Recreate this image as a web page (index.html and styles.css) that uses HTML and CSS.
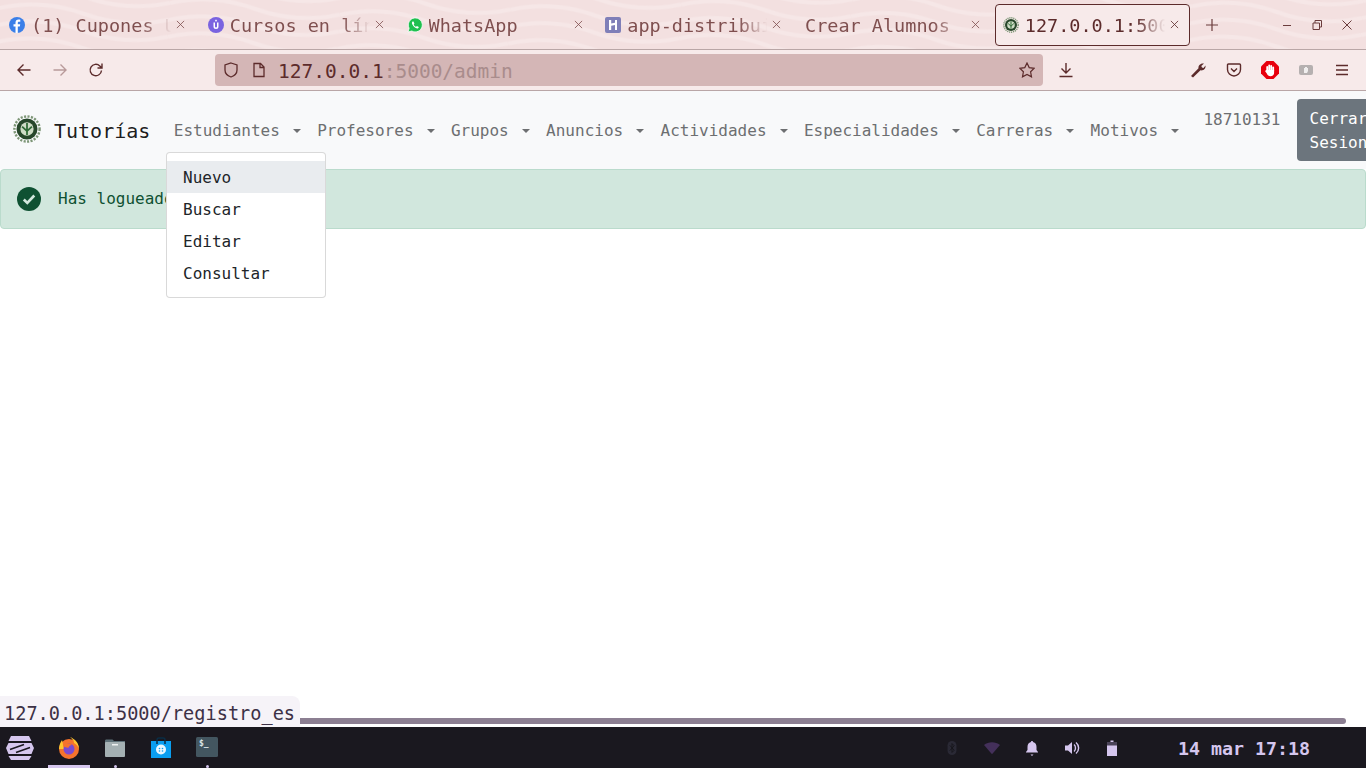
FILE: index.html
```html
<!doctype html>
<html lang="es">
<head>
    <meta charset="UTF-8">
    <title>Tutorías</title>
    <link rel="stylesheet" href="styles.css">
</head>
<body>
<div class="screen">
    <!-- barra de pestanas -->
    <div class="tabbar">
        <svg class="waves" width="1366" height="49">
            <defs>
                <pattern id="wave" width="170" height="17" patternUnits="userSpaceOnUse" patternTransform="rotate(4)">
                    <path d="M0 8C28 0 57 0 85 8S142 16 170 8" fill="none" stroke="#f6e7e7" stroke-width="4"/>
                </pattern>
            </defs>
            <rect width="1366" height="49" fill="url(#wave)"/>
        </svg>
        <div class="tab">
            <svg class="favicon" viewBox="0 0 16 16"><circle cx="8" cy="8" r="8" fill="#3b7fe8"/><path d="M8.800 16V9.600h2l.4-2.300H8.800V6c0-.8.3-1.200 1.200-1.200h1.300V2.800C10.900 2.700 10.300 2.600 9.600 2.600 7.700 2.600 6.500 3.700 6.500 5.700v1.600H4.500v2.300h2V16z" fill="#fff"/></svg>
            <span class="tab-title">(1) Cupones Udemy</span>
            <svg class="tab-close" viewBox="0 0 10 10"><path d="M1 1l8 8M9 1l-8 8"/></svg>
        </div>
        <div class="tab">
            <svg class="favicon" viewBox="0 0 16 16"><circle cx="8" cy="8" r="8" fill="#7a63e0"/><path d="M5.500 5.500v4a2.500 2.500 0 0 0 5 0v-4H9v4a1 1 0 0 1-2 0v-4z" fill="#fff"/><rect x="7.200" y="2.800" width="1.600" height="1.600" fill="#fff"/></svg>
            <span class="tab-title">Cursos en línea</span>
            <svg class="tab-close" viewBox="0 0 10 10"><path d="M1 1l8 8M9 1l-8 8"/></svg>
        </div>
        <div class="tab">
            <svg class="favicon" viewBox="0 0 16 16"><path d="M1 15l1.100-3.800A7 7 0 1 1 4.800 14z" fill="#1fc04f" stroke="#fff" stroke-width=".8"/><path d="M5.500 4.500c-.8.800-.8 2 .2 3.500s2.600 3.300 4.500 3.500c.8 0 1.600-.7 1.600-1.500l-1.900-1-.8.800c-1-.4-2-1.400-2.400-2.400l.7-.8-.9-2z" fill="#fff"/></svg>
            <span class="tab-title">WhatsApp</span>
            <svg class="tab-close" viewBox="0 0 10 10"><path d="M1 1l8 8M9 1l-8 8"/></svg>
        </div>
        <div class="tab">
            <svg class="favicon" viewBox="0 0 16 16"><rect width="16" height="16" rx="2" fill="#7f7fb8"/><path d="M4 3h2.200v3.600L10 5.800V3h2v10h-2V8L6.200 8.800V13H4z" fill="#fff"/></svg>
            <span class="tab-title">app-distribuidos</span>
            <svg class="tab-close" viewBox="0 0 10 10"><path d="M1 1l8 8M9 1l-8 8"/></svg>
        </div>
        <div class="tab">
            <span class="tab-title">Crear Alumnos</span>
            <svg class="tab-close" viewBox="0 0 10 10"><path d="M1 1l8 8M9 1l-8 8"/></svg>
        </div>
        <div class="tab tab-active">
            <svg class="favicon" viewBox="0 0 16 16"><use href="#escudo"/></svg>
            <span class="tab-title">127.0.0.1:5000/admin</span>
            <svg class="tab-close" viewBox="0 0 10 10"><path d="M1 1l8 8M9 1l-8 8"/></svg>
        </div>
        <svg class="new-tab" viewBox="0 0 14 14"><path d="M7 1v12M1 7h12"/></svg>
        <div class="win-controls">
            <svg viewBox="0 0 12 12"><path d="M2 6.500h8"/></svg>
            <svg viewBox="0 0 12 12"><path d="M2 4h6.500v6.500H2zM4 4V1.500h6.500V8H8.500"/></svg>
            <svg viewBox="0 0 12 12"><path d="M1.500 1.500l9 9M10.500 1.500l-9 9"/></svg>
        </div>
    </div>

    <!-- barra de direcciones -->
    <div class="toolbar">
        <button class="tool"><svg viewBox="0 0 16 16"><path d="M14.500 8H2M7.500 2.500L2 8l5.500 5.500"/></svg></button>
        <button class="tool tool-off"><svg viewBox="0 0 16 16"><path d="M1.500 8H14M8.500 2.500L14 8l-5.500 5.500"/></svg></button>
        <button class="tool"><svg viewBox="0 0 16 16"><path d="M13.500 8.500a5.700 5.700 0 1 1-1.700-4.600L14 6M14 1.500V6H9.500"/></svg></button>
        <div class="urlbar">
            <svg class="url-icon" viewBox="0 0 16 16"><path d="M8 1l6 2v5c0 3.500-3 6-6 7-3-1-6-3.500-6-7V3z"/></svg>
            <svg class="url-icon" viewBox="0 0 16 16"><path d="M3 1.500h6.500L13 5v9.500H3zM9 1.500V5.500h4"/></svg>
            <span class="url-text"><b>127.0.0.1</b>:5000/admin</span>
            <svg class="url-star" viewBox="0 0 16 16"><path d="M8 1l2.200 4.600 5 .7-3.600 3.500.9 5L8 12.400l-4.500 2.400.9-5L.8 6.300l5-.7z"/></svg>
        </div>
        <button class="tool tool-download"><svg viewBox="0 0 16 16"><path d="M8 1v9.500M3.500 6.500L8 11l4.500-4.500M1.500 14.500h13"/></svg></button>
        <div class="tool-group">
            <button class="tool"><svg viewBox="0 0 16 16"><path class="solid" d="M1 14l7.500-7.800C8 3.500 10.500.8 14 1.500L11.300 4l.7 1.500 1.500.5 2-2.500c.5 3.500-2.500 5.500-5 4.800L3 15.500z"/></svg></button>
            <button class="tool"><svg viewBox="0 0 16 16"><path d="M2.500 2h11c.7 0 1 .4 1 1v4.500c0 3.500-3 6.500-6.500 6.500S1.500 11 1.500 7.500V3c0-.6.3-1 1-1zM5 6.500L8 9.500l3-3"/></svg></button>
            <button class="tool"><svg class="adblock" viewBox="0 0 18 18"><path d="M5.500 0h7L18 5.500v7L12.500 18h-7L0 12.500v-7z" fill="#e8000d"/><path d="M6.200 9.500V6M8.200 9.500V4.300M10.200 9.500V4.800M12.200 10V6.300" stroke="#fff" stroke-width="1.800" stroke-linecap="round"/><path d="M5.300 9h7.800v3c0 2-1.500 3.200-3.500 3.200-2 0-3-1-3.800-2.700L4 10l1.300-1z" fill="#fff"/></svg></button>
            <button class="tool"><svg class="ext" viewBox="0 0 16 16"><rect x="1" y="3" width="14" height="10" rx="2" fill="#b5b0b0"/><path d="M6 11V6h1V5h2v1h1v3l-1 2z" fill="#f0eeee"/></svg></button>
            <button class="tool"><svg viewBox="0 0 16 16"><path d="M2 3.500h12M2 8h12M2 12.500h12"/></svg></button>
        </div>
    </div>

    <!-- pagina -->
    <div class="page">
        <nav class="navbar">
            <a class="brand" href="#">
                <svg class="brand-logo" viewBox="0 0 16 16">
                    <defs>
                        <g id="escudo">
                            <circle cx="8" cy="8" r="7.200" fill="none" stroke="#7d9676" stroke-width="1.400" stroke-dasharray="1.200 .8"/>
                            <circle cx="8" cy="8" r="6" fill="#27472a"/>
                            <circle cx="8" cy="8" r="3.800" fill="#cfdcc6"/>
                            <path d="M8 4.600v6.800M5.200 6.600L8 9.200l2.800-2.600" fill="none" stroke="#2f6a35" stroke-width="1"/>
                        </g>
                    </defs>
                    <use href="#escudo"/>
                </svg>
                Tutorías
            </a>
            <ul class="nav-list">
                <li class="nav-link caret">Estudiantes</li>
                <li class="nav-link caret">Profesores</li>
                <li class="nav-link caret">Grupos</li>
                <li class="nav-link caret">Anuncios</li>
                <li class="nav-link caret">Actividades</li>
                <li class="nav-link caret">Especialidades</li>
                <li class="nav-link caret">Carreras</li>
                <li class="nav-link caret">Motivos</li>
            </ul>
            <span class="nav-user">18710131</span>
            <button class="btn-logout">Cerrar Sesion</button>
        </nav>

        <div class="alert">
            <svg class="alert-icon" viewBox="0 0 24 24"><circle cx="12" cy="12" r="12" fill="#0f5132"/><path d="M6.800 12.500l3.500 3.500 7-7.500" fill="none" stroke="#d1e7dd" stroke-width="2.600"/></svg>
            <span>Has logueado correctamente</span>
        </div>

        <ul class="dropdown">
            <li class="dropdown-item active">Nuevo</li>
            <li class="dropdown-item">Buscar</li>
            <li class="dropdown-item">Editar</li>
            <li class="dropdown-item">Consultar</li>
        </ul>

        <div class="scroll-thumb"></div>
        <div class="status-link">127.0.0.1:5000/registro_es</div>
    </div>

    <!-- panel del sistema -->
    <div class="taskbar">
        <div class="dock">
            <div class="dock-item">
                <svg class="zorin" viewBox="0 0 28 24"><path d="M5 0h18l2.500 5h-23zM2.500 20h23L23 24H5zM2.500 7h23L28 12l-2.500 6h-23L0 12z" fill="#d5c6ee"/><path d="M4 13.500L18 8.500M10 16.500L24 11.500" stroke="#1a181f" stroke-width="1.600"/></svg>
            </div>
            <div class="dock-item running-main">
                <svg viewBox="0 0 22 22"><circle cx="11" cy="12" r="10" fill="#f5732c"/><path d="M4 3c-2 3-3 6-3 9h5zM12 0c5 2 9 6 9 12-1-3-3-5-5-6 0-3-2-4-4-6z" fill="#ffc52e"/><circle cx="11" cy="12" r="5.500" fill="#7a4bd0"/><path d="M5 9c2-3 6-3 9-1-2 0-3 1-3 2s-3 1-6-1z" fill="#f5732c"/></svg>
            </div>
            <div class="dock-item running">
                <svg viewBox="0 0 22 22"><path d="M1 4c0-1 .5-1.500 1.500-1.500h6L10 4h11v4H1z" fill="#5d7078"/><rect x="1" y="5" width="20" height="15" rx="1" fill="#a4b0b3"/><rect x="8" y="7" width="6" height="1.500" fill="#eef1f2"/></svg>
            </div>
            <div class="dock-item">
                <svg viewBox="0 0 22 22"><rect x="1" y="4" width="20" height="17" fill="#0a9ef0"/><path d="M7 7V3a2 2 0 0 1 2-2h4a2 2 0 0 1 2 2v4" fill="none" stroke="#0a2d45" stroke-width="1.500"/><circle cx="11" cy="12.500" r="5" fill="#eaf6fd"/><circle cx="9.500" cy="11.500" r=".8" fill="#0a9ef0"/><circle cx="12.500" cy="11.500" r=".8" fill="#0a9ef0"/><circle cx="9.500" cy="14" r=".8" fill="#0a9ef0"/><circle cx="12.500" cy="14" r=".8" fill="#0a9ef0"/></svg>
            </div>
            <div class="dock-item running">
                <svg viewBox="0 0 22 22"><rect width="22" height="20" rx="1.500" fill="#435660"/><text x="3" y="9" class="term-text">$_</text></svg>
            </div>
        </div>
        <div class="tray">
            <svg viewBox="0 0 12 18"><rect x="1" y="1" width="10" height="16" rx="5" fill="#2a2935"/><path d="M3.500 6l5 5.500L6 14V4l2.500 2.500-5 5.500" fill="none" stroke="#15141a" stroke-width="1"/></svg>
            <svg viewBox="0 0 18 14"><path d="M0 3.500C5-.5 13-.5 18 3.500L9 14z" fill="#44305a"/></svg>
            <svg viewBox="0 0 16 16"><path d="M8 1c.7 0 1 .4 1 1 2.500.6 3.500 2.700 3.500 5v3l1.500 2v.5H2V12l1.500-2V7C3.500 4.700 4.500 2.600 7 2c0-.6.3-1 1-1zM6.500 14.500h3L8 16z" fill="#d5c6ee"/></svg>
            <svg viewBox="0 0 16 16"><path d="M1 5.500h3L8 2v12L4 10.500H1z" fill="#d5c6ee"/><path d="M10 4.500c2 1.500 2 5.500 0 7M12 2.500c3.500 3 3.500 8 0 11" fill="none" stroke="#d5c6ee" stroke-width="1.400"/></svg>
            <svg viewBox="0 0 16 16"><path d="M6.500 .5h3V2H13v14H3V2h3.500z" fill="#d5c6ee"/><path d="M3 2h10v3.500H3z" fill="#4a4358"/></svg>
        </div>
        <div class="clock">14 mar 17:18</div>
    </div>
</div>
</body>
</html>
```

FILE: styles.css
```css
* {
    box-sizing: border-box;
}

html, body {
    margin: 0;
    height: 100%;
    overflow: hidden;
}

body {
    font-family: "DejaVu Sans Mono", "Liberation Mono", monospace;
    font-size: 16px;
    line-height: 24px;
    color: #212529;
}

ul {
    list-style: none;
    margin: 0;
    padding: 0;
}

a {
    text-decoration: none;
}

button {
    font: inherit;
    border: none;
    background: none;
    padding: 0;
}

.screen {
    display: flex;
    flex-direction: column;
    width: 1366px;
    height: 768px;
    overflow: hidden;
}

/* pestanas */
.tabbar {
    position: relative;
    display: flex;
    align-items: center;
    gap: 3.75px;
    flex: none;
    height: 50px;
    padding: 0 0 0 1px;
    background: #f3e0e0;
    border-bottom: 1px solid #b9a6a6;
}

.waves {
    position: absolute;
    left: 0;
    top: 0;
}

.tab {
    position: relative;
    display: flex;
    align-items: center;
    flex: none;
    width: 195px;
    height: 42px;
    padding: 0 8px;
    border: 1px solid transparent;
    color: #7f4f4f;
}

.tab-active {
    background: #f7eaea;
    border-color: #5c2b2b;
    border-radius: 4px;
    color: #5c2b2b;
}

.favicon {
    flex: none;
    width: 16px;
    height: 16px;
    margin: 0 6px 0 -1px;
}

.tab-title {
    flex: 1;
    overflow: hidden;
    white-space: nowrap;
    padding-top: 2px;
    font-size: 18.5px;
    -webkit-mask-image: linear-gradient(to right, #000 78%, transparent 98%);
    mask-image: linear-gradient(to right, #000 78%, transparent 98%);
}

.tab-close {
    flex: none;
    width: 9px;
    height: 9px;
    margin: 0 2px;
    fill: none;
    stroke: currentColor;
    stroke-width: .9;
}

.new-tab {
    position: relative;
    width: 14px;
    height: 14px;
    margin-left: 11px;
    fill: none;
    stroke: #6b3c3c;
    stroke-width: 1.2;
}

.win-controls {
    position: relative;
    display: flex;
    gap: 18px;
    margin-left: auto;
    padding-right: 13px;
}

.win-controls svg {
    width: 12px;
    height: 12px;
    fill: none;
    stroke: #6b3c3c;
    stroke-width: 1;
}

/* direcciones */
.toolbar {
    display: flex;
    align-items: center;
    flex: none;
    height: 41px;
    padding: 0 6px;
    background: #f7eaea;
    border-bottom: 1px solid #b9a6a6;
}

.tool {
    display: flex;
    align-items: center;
    justify-content: center;
    flex: none;
    width: 36px;
    height: 32px;
}

.tool svg {
    width: 16px;
    height: 16px;
    fill: none;
    stroke: #5c2b2b;
    stroke-width: 1.4;
}

.tool svg .solid {
    fill: #5c2b2b;
    stroke: none;
}

.tool svg.adblock,
.tool svg.ext {
    stroke: none;
}

.tool svg.adblock {
    width: 18px;
    height: 18px;
}

.tool-off svg {
    stroke: #b89a9a;
}

.urlbar {
    display: flex;
    align-items: center;
    flex: none;
    width: 828px;
    height: 32px;
    margin-left: 101px;
    padding: 0 8px;
    background: #d4b6b6;
    border-radius: 4px;
}

.url-icon {
    flex: none;
    width: 16px;
    height: 16px;
    margin-right: 12px;
    fill: none;
    stroke: #5c2b2b;
    stroke-width: 1.3;
}

.url-text {
    flex: 1;
    margin-left: -1px;
    padding-top: 4px;
    font-size: 19.5px;
    color: #a98c8c;
}

.url-text b {
    font-weight: normal;
    color: #5c2b2b;
}

.url-star {
    flex: none;
    width: 16px;
    height: 16px;
    fill: none;
    stroke: #5c2b2b;
    stroke-width: 1.2;
}

.tool-download {
    margin-left: 5px;
}

.tool-group {
    display: flex;
    margin-left: auto;
}

/* pagina */
.page {
    position: relative;
    flex: 1;
    background: #fff;
}

.navbar {
    display: flex;
    align-items: center;
    height: 78px;
    padding: 8px 0 8px 13px;
    background: #f8f9fa;
    white-space: nowrap;
}

.brand {
    display: flex;
    align-items: center;
    margin-right: 15.5px;
    padding-top: 2px;
    font-size: 20px;
    color: rgba(0, 0, 0, .9);
}

.brand-logo {
    width: 28px;
    height: 28px;
    margin-right: 13px;
    margin-top: -4px;
}

.nav-list {
    display: flex;
}

.nav-link {
    padding: 9px 8px 7px;
    color: #6d6f71;
}

.caret::after {
    content: "";
    display: inline-block;
    margin: 0 .4px 0 13px;
    vertical-align: .2em;
    border-top: 4px solid;
    border-left: 4px solid transparent;
    border-right: 4px solid transparent;
}

.nav-user {
    align-self: flex-start;
    margin-left: 16px;
    padding: 9px 0 7px;
    color: #6d6f71;
}

.btn-logout {
    flex: none;
    width: 84px;
    height: 62px;
    margin-left: 16px;
    padding: 2px 0 0 13px;
    align-self: flex-start;
    text-align: left;
    white-space: normal;
    color: #fff;
    background: #6c757d;
    border-radius: 4px 0 0 4px;
}

.alert {
    display: flex;
    align-items: center;
    height: 60px;
    padding: 0 16px;
    color: #0f5132;
    background: #d1e7dd;
    border: 1px solid #badbcc;
    border-radius: 4px;
}

.alert-icon {
    width: 24px;
    height: 24px;
    margin-right: 17px;
}

.dropdown {
    position: absolute;
    left: 166px;
    top: 61px;
    width: 160px;
    padding: 8px 0;
    background: #fff;
    border: 1px solid rgba(0, 0, 0, .15);
    border-radius: 4px;
}

.dropdown-item {
    padding: 5px 16px 3px;
    color: #212529;
}

.dropdown-item.active {
    background: #e9ecef;
}

.scroll-thumb {
    position: absolute;
    left: 0;
    right: 20px;
    bottom: 3px;
    height: 6px;
    background: #8c7f92;
    border-radius: 3px;
}

.status-link {
    position: absolute;
    left: 0;
    bottom: 0;
    width: 300px;
    height: 31px;
    padding: 6px 0 0 4px;
    font-size: 18.6px;
    color: #3d3146;
    background: #f6f3f8;
    border-top-right-radius: 8px;
}

/* panel */
.taskbar {
    display: flex;
    align-items: center;
    flex: none;
    height: 41px;
    background: #1a181f;
}

.dock {
    display: flex;
    width: 930px;
}

.dock-item {
    position: relative;
    display: flex;
    align-items: center;
    justify-content: center;
    width: 46px;
    height: 41px;
}

.dock-item svg {
    width: 22px;
    height: 22px;
}

.dock-item .zorin {
    width: 28px;
    height: 24px;
    margin-left: -6px;
}

.running::after,
.running-main::after {
    content: "";
    position: absolute;
    bottom: 0;
    background: #d5c6ee;
}

.running::after {
    left: 22px;
    width: 3px;
    height: 3px;
    border-radius: 50%;
}

.running-main::after {
    left: 2px;
    width: 42px;
    height: 3px;
}

.tray {
    display: flex;
    align-items: center;
    gap: 24px;
    width: 238px;
    padding-left: 14px;
}

.tray svg {
    width: 16px;
    height: 16px;
}

.term-text {
    font-size: 8px;
    font-weight: bold;
    fill: #dfe6e8;
}

.clock {
    margin-left: 10px;
    padding-top: 2px;
    font-size: 18.3px;
    font-weight: bold;
    color: #d5c6ee;
}
```
